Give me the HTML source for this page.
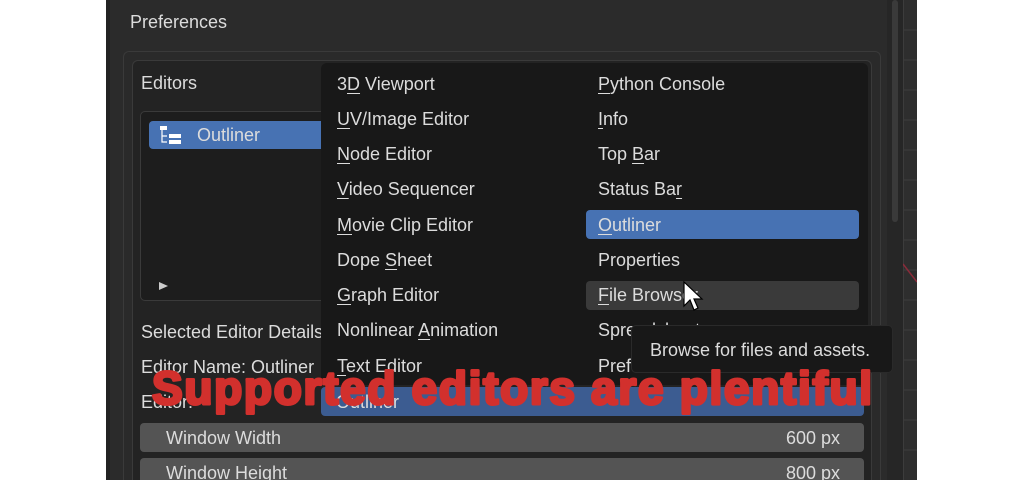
<!DOCTYPE html>
<html><head><meta charset="utf-8"><style>
*{margin:0;padding:0;box-sizing:border-box}
html,body{width:1024px;height:480px;overflow:hidden}
body{background:#fff;position:relative;font-family:"Liberation Sans",sans-serif;color:#dcdcdc;font-size:18px}
.a{position:absolute}
.t{position:absolute;white-space:nowrap;line-height:20px}
u{text-decoration:underline;text-underline-offset:3px}
</style></head><body>
<div class="a" style="left:106px;top:0;width:811px;height:480px;background:#2b2b2b"></div>
<div class="a" style="left:106px;top:0;width:4px;height:480px;background:#222"></div>
<div class="a" style="left:887px;top:0;width:16px;height:480px;background:#262626"></div>
<div class="a" style="left:892px;top:0;width:6px;height:222px;background:#3a3a3a;border-radius:3px"></div>
<div class="a" style="left:903px;top:0;width:14px;height:480px;background:#2e2e2e;border-left:1px solid #3c3c3c"></div>
<svg class="a" style="left:903px;top:0" width="14" height="480"><g stroke="#3d3d3d" stroke-width="1"><path d="M0 30H14M0 60H14M0 90H14M0 120H14M0 150H14M0 180H14M0 210H14M0 240H14M0 270H14M0 300H14M0 330H14M0 360H14M0 390H14M0 420H14M0 450H14"/></g><path d="M0 264L14 282" stroke="#8a2b3a" stroke-width="1.5"/></svg>
<div class="t" style="left:130px;top:12px">Preferences</div>
<div class="a" style="left:123px;top:51px;width:758px;height:429px;border:1px solid #3a3a3a;border-bottom:none;border-radius:6px 6px 0 0;background:#2a2a2a"></div>
<div class="a" style="left:132px;top:60px;width:740px;height:420px;border:1px solid #3a3a3a;border-bottom:none;border-radius:6px 6px 0 0;background:#232323"></div>
<div class="t" style="left:141px;top:73px">Editors</div>
<div class="a" style="left:140px;top:111px;width:200px;height:190px;border:1px solid #3a3a3a;border-radius:5px;background:#1d1d1d"></div>
<div class="a" style="left:149px;top:121px;width:190px;height:28px;background:#4772b3;border-radius:4px"></div>
<svg class="a" style="left:160px;top:126px" width="22" height="20"><rect x="0" y="0" width="7" height="4" fill="#fff"/><path d="M2 4V16H7M2 10H7" stroke="#fff" fill="none" stroke-width="1.2"/><rect x="9" y="8" width="12" height="4" fill="#fff"/><rect x="9" y="14" width="12" height="4" fill="#fff"/></svg>
<div class="t" style="left:197px;top:125px">Outliner</div>
<div class="a" style="left:159px;top:282px;width:0;height:0;border-left:9px solid #ccc;border-top:4px solid transparent;border-bottom:4px solid transparent"></div>
<div class="t" style="left:141px;top:322px">Selected Editor Details</div>
<div class="t" style="left:141px;top:357px">Editor Name: Outliner</div>
<div class="t" style="left:141px;top:392px">Editor:</div>
<div class="a" style="left:321px;top:387px;width:543px;height:29px;background:#3c5c91;border-radius:4px"></div>
<div class="t" style="left:336px;top:392px">Outliner</div>
<div class="a" style="left:140px;top:423px;width:724px;height:29px;background:#545454;border-radius:4px"></div>
<div class="t" style="left:166px;top:428px">Window Width</div>
<div class="t" style="left:786px;top:428px">600 px</div>
<div class="a" style="left:140px;top:458px;width:724px;height:29px;background:#545454;border-radius:4px"></div>
<div class="t" style="left:166px;top:463px">Window Height</div>
<div class="t" style="left:786px;top:463px">800 px</div>
<div class="a" style="left:321px;top:63px;width:547px;height:322px;background:#181818;border-radius:6px"></div>
<div class="a" style="left:586px;top:210px;width:273px;height:29px;background:#4772b3;border-radius:4px"></div>
<div class="a" style="left:586px;top:281px;width:273px;height:29px;background:#3a3a3a;border-radius:4px"></div>
<div class="t" style="left:337px;top:74px">3<u>D</u> Viewport</div>
<div class="t" style="left:337px;top:109px"><u>U</u>V/Image Editor</div>
<div class="t" style="left:337px;top:144px"><u>N</u>ode Editor</div>
<div class="t" style="left:337px;top:179px"><u>V</u>ideo Sequencer</div>
<div class="t" style="left:337px;top:215px"><u>M</u>ovie Clip Editor</div>
<div class="t" style="left:337px;top:250px">Dope <u>S</u>heet</div>
<div class="t" style="left:337px;top:285px"><u>G</u>raph Editor</div>
<div class="t" style="left:337px;top:320px">Nonlinear <u>A</u>nimation</div>
<div class="t" style="left:337px;top:356px"><u>T</u>ext Editor</div>
<div class="t" style="left:598px;top:74px"><u>P</u>ython Console</div>
<div class="t" style="left:598px;top:109px"><u>I</u>nfo</div>
<div class="t" style="left:598px;top:144px">Top <u>B</u>ar</div>
<div class="t" style="left:598px;top:179px">Status Ba<u>r</u></div>
<div class="t" style="left:598px;top:215px"><u>O</u>utliner</div>
<div class="t" style="left:598px;top:250px">Properties</div>
<div class="t" style="left:598px;top:285px"><u>F</u>ile Browser</div>
<div class="t" style="left:598px;top:320px">Spreadsheet</div>
<div class="t" style="left:598px;top:356px">Preferences</div>
<div class="a" style="left:631px;top:325px;width:262px;height:48px;background:#181818;border:1px solid #2a2a2a;border-radius:5px"></div>
<div class="t" style="left:650px;top:340px">Browse for files and assets.</div>
<svg class="a" style="left:683px;top:281px" width="22" height="34"><path d="M1 1V25L7 19L11 29L15 27L11 18H19Z" fill="#fff" stroke="#000" stroke-width="1.2"/></svg>
<svg class="a" style="left:0;top:0" width="1024" height="480"><text x="152" y="404" textLength="720" lengthAdjust="spacing" font-family="Liberation Sans" font-weight="bold" font-size="46" fill="#d2302d" stroke="#d2302d" stroke-width="3" stroke-linejoin="round">Supported editors are plentiful</text></svg>
</body></html>
